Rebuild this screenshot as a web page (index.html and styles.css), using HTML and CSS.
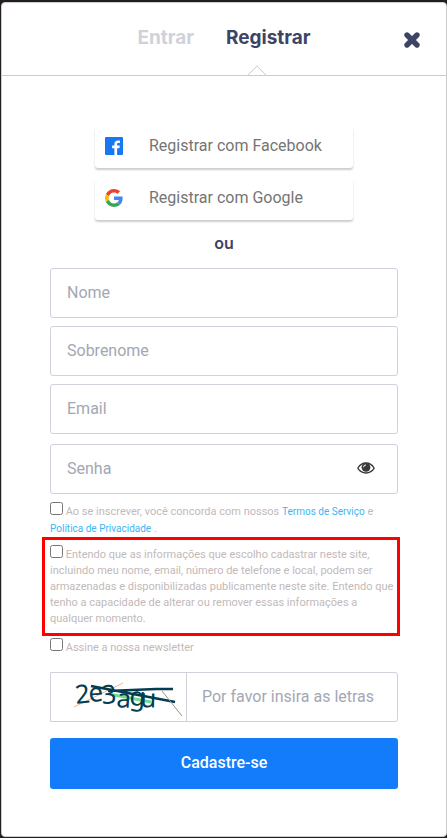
FILE: index.html
```html
<!DOCTYPE html>
<html lang="pt-BR">
<head>
    <meta charset="UTF-8">
    <meta name="viewport" content="width=device-width, initial-scale=1.0">
    <title>Registrar</title>
    <link rel="stylesheet" href="styles.css">
</head>
<body>
    <main class="modal">
        <header class="modal-header">
            <nav class="tabs">
                <a href="#entrar" class="tab">Entrar</a>
                <a href="#registrar" class="tab active">Registrar</a>
            </nav>
            <button type="button" class="close" aria-label="Fechar">
                <svg width="18" height="18" viewBox="0 0 18 18"><path d="M4 4l10 10M14 4L4 14" stroke="#3d4465" stroke-width="5.4" stroke-linecap="round"/></svg>
            </button>
        </header>

        <div class="modal-body">
            <div class="social">
                <button type="button" class="social-btn">
                    <svg width="18" height="18" viewBox="0 0 18 18"><rect width="18" height="18" rx="1" fill="#1877f2"/><path d="M9.4 18v-6.8H7.1V8.5h2.3V6.9c0-2.3 1.4-3.5 3.5-3.5.9 0 1.8.1 2 .2v2.4h-1.4c-1.1 0-1.4.5-1.4 1.2v1.3h2.7l-.4 2.7h-2.3V18z" fill="#fff"/></svg>
                    <span>Registrar com Facebook</span>
                </button>
                <button type="button" class="social-btn">
                    <svg width="18" height="18" viewBox="0 0 48 48">
                        <path fill="#ea4335" d="M24 9.5c3.54 0 6.71 1.22 9.21 3.6l6.85-6.85C35.9 2.38 30.47 0 24 0 14.62 0 6.51 5.38 2.56 13.22l7.98 6.19C12.43 13.72 17.74 9.5 24 9.5z"/>
                        <path fill="#4285f4" d="M46.98 24.55c0-1.57-.15-3.09-.38-4.55H24v9.02h12.94c-.58 2.96-2.26 5.48-4.78 7.18l7.73 6c4.51-4.18 7.09-10.36 7.09-17.65z"/>
                        <path fill="#fbbc05" d="M10.53 28.59c-.48-1.45-.76-2.99-.76-4.59s.27-3.14.76-4.59l-7.98-6.19C.92 16.46 0 20.12 0 24c0 3.88.92 7.54 2.56 10.78l7.97-6.19z"/>
                        <path fill="#34a853" d="M24 48c6.48 0 11.93-2.13 15.89-5.81l-7.73-6c-2.15 1.45-4.92 2.3-8.16 2.3-6.26 0-11.57-4.22-13.47-9.91l-7.98 6.19C6.51 42.62 14.62 48 24 48z"/>
                    </svg>
                    <span>Registrar com Google</span>
                </button>
            </div>
            <p class="divider">ou</p>

            <form class="form">
                <div class="fields">
                    <input class="field" type="text" placeholder="Nome" aria-label="Nome">
                    <input class="field" type="text" placeholder="Sobrenome" aria-label="Sobrenome">
                    <input class="field" type="email" placeholder="Email" aria-label="Email">
                </div>
                <div class="field password">
                    <input type="password" placeholder="Senha" aria-label="Senha">
                    <button type="button" class="show" aria-label="Mostrar senha">
                        <svg width="18" height="12" viewBox="0 0 18 12"><path d="M.8 6.2C2.6 3 5.6 1 9 1s6.4 2 8.2 5.2C15.4 9.3 12.4 11 9 11S2.6 9.3.8 6.2z" fill="#fff" stroke="#3a3a3a" stroke-width="1.3"/><circle cx="9" cy="5.3" r="4.4" fill="#3a3a3a"/><path d="M6.6 5.3A2.4 2.4 0 0 1 9 2.9" fill="none" stroke="#fff" stroke-width="1"/></svg>
                    </button>
                </div>

                <div class="check">
                    <input type="checkbox" id="terms">
                    <label for="terms">Ao se inscrever, você concorda com nossos</label>
                    <a href="#termos">Termos de Serviço</a> e <a href="#privacidade">Política de Privacidade</a> .
                </div>
                <div class="check highlight">
                    <input type="checkbox" id="consent">
                    <label for="consent">Entendo que as informações que escolho cadastrar neste site, incluindo meu nome, email, número de telefone e local, podem ser armazenadas e disponibilizadas publicamente neste site. Entendo que tenho a capacidade de alterar ou remover essas informações a qualquer momento.</label>
                </div>
                <div class="check">
                    <input type="checkbox" id="news">
                    <label for="news">Assine a nossa newsletter</label>
                </div>

                <div class="captcha">
                    <svg class="captcha-code" width="135" height="48" viewBox="0 0 135 48">
                        <path d="M23 34L72 10" stroke="#f5b48c"/>
                        <path d="M58 21L100 29" stroke="#6fdc8c" stroke-width="3"/>
                        <text x="25 38 51 65 78 89" y="31 29 31 34 32 34" rotate="-6 -4 -3 4 4 2">2e3agu</text>
                        <path d="M40 13L124 29M57 18l48-2h17" fill="none" stroke="#053c50" stroke-width="2.4"/>
                        <path d="M111 18L131 43" stroke="#a58f80"/>
                    </svg>
                    <input type="text" placeholder="Por favor insira as letras" aria-label="Por favor insira as letras">
                </div>
                <button type="submit" class="submit">Cadastre-se</button>
            </form>
        </div>
    </main>
</body>
</html>
```
FILE: styles.css
```css
* {
    margin: 0;
    padding: 0;
    box-sizing: border-box;
}
body {
    font-family: Roboto, sans-serif;
    background-color: #231f20;
    padding: 2px 0 0 1px;
}
button {
    border: 0;
    background: none;
    font-family: inherit;
    cursor: pointer;
}
svg {
    display: block;
}
.modal {
    background-color: #fff;
    border: 1px solid #ccc;
    border-radius: 4px;
}

/* header */
.modal-header {
    display: grid;
    grid-template-columns: 1fr auto 1fr;
    align-items: center;
    height: 73px;
    border-bottom: 1px solid #ccc;
}
.tabs {
    grid-column: 2;
    display: flex;
    gap: 32px;
    height: 72px;
}
.tab {
    position: relative;
    font-family: Inter, sans-serif;
    font-size: 19px;
    font-weight: 700;
    line-height: 70px;
    color: #d0d1da;
    text-decoration: none;
}
.tab.active {
    color: #3d4465;
}
.tab.active::after {
    content: "";
    position: absolute;
    left: 24px;
    bottom: -7px;
    width: 12px;
    height: 12px;
    background-color: #fff;
    border: 1px solid #ccc;
    border-color: #ccc transparent transparent #ccc;
    transform: rotate(45deg);
    clip-path: polygon(0 0, 100% 0, 0 100%);
}
.close {
    justify-self: end;
    margin: 2px 25px 0 0;
}

.modal-body {
    padding: 50px 48px 47px;
}

/* social login */
.social {
    display: flex;
    flex-direction: column;
    align-items: center;
    gap: 10px;
}
.social-btn {
    display: flex;
    align-items: center;
    gap: 26px;
    width: 258px;
    height: 42px;
    padding: 0 10px 3px;
    border-radius: 3px;
    box-shadow: 0 2px 2px rgba(0, 0, 0, 0.2);
    font-size: 16px;
    color: #757575;
}
.divider {
    margin: 12px 0 13px;
    font-family: Inter, sans-serif;
    font-size: 16px;
    font-weight: 600;
    line-height: 23px;
    text-align: center;
    color: #3d4465;
}

/* form */
.fields {
    display: flex;
    flex-direction: column;
    gap: 8px;
    margin-bottom: 10px;
}
.field {
    width: 100%;
    height: 50px;
    padding: 0 16px 2px;
    border: 1px solid #d0d1da;
    border-radius: 3px;
}
input {
    font-family: inherit;
    font-size: 16px;
    color: #3d4465;
}
input::placeholder {
    color: #a3a7b3;
}
.password {
    display: flex;
    align-items: center;
    padding-right: 22px;
}
.password input {
    flex: 1;
    min-width: 0;
    border: 0;
}
.check {
    margin-top: 8px;
    font-size: 11px;
    line-height: 17px;
    color: #c3b9b9;
}
.check input {
    width: 13px;
    height: 13px;
}
.check a {
    font-size: 10px;
    color: #3db5f5;
    text-decoration: none;
}
.highlight {
    margin: 0 -2px 0 -8px;
    padding: 5px 0 6px 5px;
    border: 3px solid #f00;
    line-height: 16px;
}
.highlight + .check {
    margin-top: 2px;
}
.captcha {
    display: flex;
    height: 50px;
    margin: 16px 0;
    border: 1px solid #d0d1da;
    border-radius: 0 3px 3px 0;
}
.captcha-code text {
    font-family: "Noto Sans", sans-serif;
    font-size: 26px;
    fill: #053c50;
}
.captcha input {
    flex: 1;
    min-width: 0;
    padding: 0 15px 2px;
    border: 0;
    border-left: 1px solid #d0d1da;
    background: none;
}
.submit {
    width: 100%;
    height: 51px;
    padding-bottom: 2px;
    border-radius: 3px;
    background-color: #127cfa;
    font-size: 16px;
    font-weight: 500;
    color: #fff;
}
```
